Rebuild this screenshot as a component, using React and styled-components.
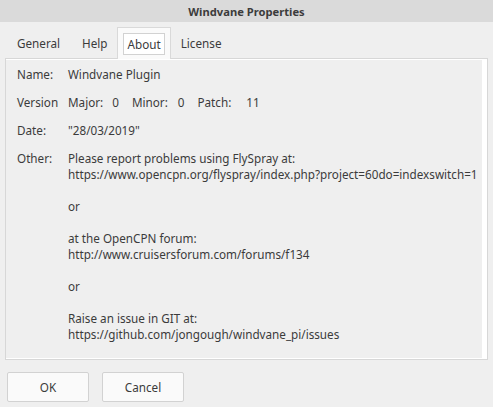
import React from 'react';
import styled, { createGlobalStyle } from 'styled-components';

const Global = createGlobalStyle`
  html, body {
    margin: 0;
    padding: 0;
    background: #efefef;
  }
  body {
    font-family: "Noto Sans", "Open Sans", sans-serif;
    font-size: 11.7px;
    color: #3b3b3b;
  }
`;

const Window = styled.div`
  width: 493px;
  height: 407px;
  display: flex;
  flex-direction: column;
  background: #efefef;
  overflow: hidden;
`;

const TitleBar = styled.div`
  height: 22px;
  flex: none;
  background: #dadada;
  display: flex;
  align-items: center;
  justify-content: center;
  font-weight: bold;
  font-size: 11.2px;
  color: #3c3c3c;
`;

const TabBar = styled.div`
  display: flex;
  align-items: flex-end;
  margin-top: 5px;
  padding-left: 6px;
  height: 31px;
  flex: none;
`;

const Tab = styled.div`
  height: 31px;
  box-sizing: border-box;
  padding: 0 ${p => (p.$active ? 5 : 11)}px;
  display: flex;
  align-items: center;
  color: #3b3b3b;
  ${p => p.$active && `
    background: #fafafa;
    border: 1px solid #d9d9d9;
    border-bottom: none;
    margin: 0 -1px -1px -2px;
    height: 32px;
    position: relative;
    z-index: 1;
  `}
`;

const Focus = styled.span`
  border: 1px solid #d2d2d2;
  background: #fff;
  padding: 2px 3px 2px 4px;
  line-height: 16px;
`;

const Panel = styled.div`
  margin: 0 5px;
  height: 302px;
  flex: none;
  box-sizing: border-box;
  border: 1px solid #d7d7d7;
  background: #fff;
  padding: 1px 5px 1px 0;
  display: flex;
`;

const Page = styled.div`
  flex: 1;
  min-width: 0;
  background: #efefef;
  padding-left: 11px;
  display: grid;
  grid-template-columns: 51px 1fr;
  align-content: start;
  white-space: nowrap;
`;

const Label = styled.div`
  padding: 6px 0;
  line-height: 16px;
`;

const Value = styled.div`
  padding: 6px 0;
  line-height: 16px;
  min-height: 16px;
`;

const Blank = styled.div`
  height: 16px;
`;

const Part = styled.span`
  margin-right: ${p => p.$gap}px;
`;

const Footer = styled.div`
  display: flex;
  gap: 13px;
  padding: 12px 7px 0;
`;

const Button = styled.button`
  width: 82px;
  height: 30px;
  box-sizing: border-box;
  border: 1px solid #d2d2d2;
  border-radius: 2px;
  background: #fafafa;
  font-family: inherit;
  font-size: 11.7px;
  color: #3b3b3b;
`;

const other = [
  'Please report problems using FlySpray at:',
  'https://www.opencpn.org/flyspray/index.php?project=60do=indexswitch=1',
  '',
  'or',
  '',
  'at the OpenCPN forum:',
  'http://www.cruisersforum.com/forums/f134',
  '',
  'or',
  '',
  'Raise an issue in GIT at:',
  'https://github.com/jongough/windvane_pi/issues',
];

export default function App() {
  return (
    <Window>
      <Global />
      <TitleBar>Windvane Properties</TitleBar>
      <TabBar>
        <Tab>General</Tab>
        <Tab>Help</Tab>
        <Tab $active><Focus>About</Focus></Tab>
        <Tab>License</Tab>
      </TabBar>
      <Panel>
        <Page>
          <Label>Name:</Label>
          <Value>Windvane Plugin</Value>
          <Label>Version</Label>
          <Value>
            <Part $gap={9}>Major:</Part><Part $gap={13}>0</Part>
            <Part $gap={10}>Minor:</Part><Part $gap={13}>0</Part>
            <Part $gap={15}>Patch:</Part>11
          </Value>
          <Label>Date:</Label>
          <Value>"28/03/2019"</Value>
          <Label>Other:</Label>
          <Value>
            {other.map((line, i) => (line ? <div key={i}>{line}</div> : <Blank key={i} />))}
          </Value>
        </Page>
      </Panel>
      <Footer>
        <Button>OK</Button>
        <Button>Cancel</Button>
      </Footer>
    </Window>
  );
}
